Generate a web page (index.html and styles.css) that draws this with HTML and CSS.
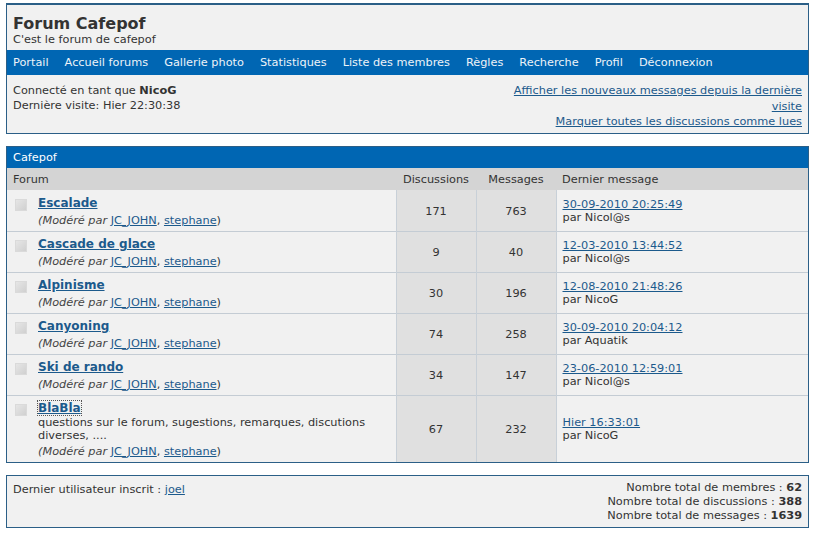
FILE: index.html
```html
<!DOCTYPE html>
<html lang="fr">
<head>
    <meta charset="UTF-8">
    <title>Forum Cafepof</title>
    <link rel="stylesheet" href="styles.css">
</head>
<body>
    <div class="box header">
        <div class="brand">
            <h1>Forum Cafepof</h1>
            <p>C'est le forum de cafepof</p>
        </div>
        <ul class="nav">
            <li><a href="#">Portail</a></li>
            <li><a href="#">Accueil forums</a></li>
            <li><a href="#">Gallerie photo</a></li>
            <li><a href="#">Statistiques</a></li>
            <li><a href="#">Liste des membres</a></li>
            <li><a href="#">Règles</a></li>
            <li><a href="#">Recherche</a></li>
            <li><a href="#">Profil</a></li>
            <li><a href="#">Déconnexion</a></li>
        </ul>
        <div class="userbar">
            <div>
                Connecté en tant que <strong>NicoG</strong><br>
                Dernière visite: Hier 22:30:38
            </div>
            <div class="userlinks">
                <a href="#">Afficher les nouveaux messages depuis la dernière visite</a><br>
                <a href="#">Marquer toutes les discussions comme lues</a>
            </div>
        </div>
    </div>

    <div class="box category">
        <h2>Cafepof</h2>
        <table class="forums">
            <thead>
                <tr>
                    <th class="col-forum">Forum</th>
                    <th class="col-num">Discussions</th>
                    <th class="col-num">Messages</th>
                    <th class="col-last">Dernier message</th>
                </tr>
            </thead>
            <tbody>
                <tr>
                    <td class="forum">
                        <div class="forum-row">
                            <span class="icon"></span>
                            <div class="info">
                                <a class="title" href="#">Escalade</a>
                                <div class="mods"><em>(Modéré par</em> <a href="#">JC_JOHN</a>, <a href="#">stephane</a>)</div>
                            </div>
                        </div>
                    </td>
                    <td class="num">171</td>
                    <td class="num">763</td>
                    <td class="last"><a href="#">30-09-2010 20:25:49</a><br>par Nicol@s</td>
                </tr>
                <tr>
                    <td class="forum">
                        <div class="forum-row">
                            <span class="icon"></span>
                            <div class="info">
                                <a class="title" href="#">Cascade de glace</a>
                                <div class="mods"><em>(Modéré par</em> <a href="#">JC_JOHN</a>, <a href="#">stephane</a>)</div>
                            </div>
                        </div>
                    </td>
                    <td class="num">9</td>
                    <td class="num">40</td>
                    <td class="last"><a href="#">12-03-2010 13:44:52</a><br>par Nicol@s</td>
                </tr>
                <tr>
                    <td class="forum">
                        <div class="forum-row">
                            <span class="icon"></span>
                            <div class="info">
                                <a class="title" href="#">Alpinisme</a>
                                <div class="mods"><em>(Modéré par</em> <a href="#">JC_JOHN</a>, <a href="#">stephane</a>)</div>
                            </div>
                        </div>
                    </td>
                    <td class="num">30</td>
                    <td class="num">196</td>
                    <td class="last"><a href="#">12-08-2010 21:48:26</a><br>par NicoG</td>
                </tr>
                <tr>
                    <td class="forum">
                        <div class="forum-row">
                            <span class="icon"></span>
                            <div class="info">
                                <a class="title" href="#">Canyoning</a>
                                <div class="mods"><em>(Modéré par</em> <a href="#">JC_JOHN</a>, <a href="#">stephane</a>)</div>
                            </div>
                        </div>
                    </td>
                    <td class="num">74</td>
                    <td class="num">258</td>
                    <td class="last"><a href="#">30-09-2010 20:04:12</a><br>par Aquatik</td>
                </tr>
                <tr>
                    <td class="forum">
                        <div class="forum-row">
                            <span class="icon"></span>
                            <div class="info">
                                <a class="title" href="#">Ski de rando</a>
                                <div class="mods"><em>(Modéré par</em> <a href="#">JC_JOHN</a>, <a href="#">stephane</a>)</div>
                            </div>
                        </div>
                    </td>
                    <td class="num">34</td>
                    <td class="num">147</td>
                    <td class="last"><a href="#">23-06-2010 12:59:01</a><br>par Nicol@s</td>
                </tr>
                <tr>
                    <td class="forum">
                        <div class="forum-row">
                            <span class="icon"></span>
                            <div class="info">
                                <a class="title focused" href="#">BlaBla</a>
                                <div class="desc">questions sur le forum, sugestions, remarques, discutions diverses, ....</div>
                                <div class="mods"><em>(Modéré par</em> <a href="#">JC_JOHN</a>, <a href="#">stephane</a>)</div>
                            </div>
                        </div>
                    </td>
                    <td class="num">67</td>
                    <td class="num">232</td>
                    <td class="last"><a href="#">Hier 16:33:01</a><br>par NicoG</td>
                </tr>
            </tbody>
        </table>
    </div>

    <div class="box stats">
        <div class="newest">Dernier utilisateur inscrit : <a href="#">joel</a></div>
        <div class="totals">
            Nombre total de membres : <strong>62</strong><br>
            Nombre total de discussions : <strong>388</strong><br>
            Nombre total de messages : <strong>1639</strong>
        </div>
    </div>
</body>
</html>
```

FILE: styles.css
```css
/* Base */
body {
    font-family: "DejaVu Sans", Verdana, sans-serif;
    font-size: 11.3px;
    color: #333;
    background: #fff;
    margin: 3px 6px 0 6px;
}

a {
    color: #1c5a8c;
}

/* Boites */
.box {
    background: #f1f1f1;
    border: 1px solid #2b5f87;
}

/* En-tete */
.header {
    border-top-width: 2px;
}
.brand {
    padding: 9px 6px 4px;
}
.brand h1 {
    margin: 0;
    font-size: 16px;
    line-height: 19px;
    color: #333;
}
.brand p {
    margin: 0;
    line-height: 13px;
}

.nav {
    list-style: none;
    margin: 0;
    padding: 0 6px;
    height: 25px;
    display: flex;
    align-items: center;
    gap: 16px;
    background: #0066b3;
}
.nav a {
    color: #eef3f8;
    text-decoration: none;
}

.userbar {
    display: flex;
    justify-content: space-between;
    padding: 8px 6px 0;
    line-height: 15px;
    min-height: 50px;
}
.userlinks {
    width: 300px;
    text-align: right;
    line-height: 15.5px;
}

/* Categorie */
.category {
    margin-top: 12px;
}
.category h2 {
    margin: 0;
    height: 21px;
    line-height: 21px;
    padding: 0 6px;
    font-size: 11.3px;
    font-weight: normal;
    color: #fff;
    background: #0066b3;
}

.forums {
    width: 100%;
    border-collapse: collapse;
}
.forums th {
    background: #d4d4d4;
    font-weight: normal;
    height: 22px;
    padding: 0 6px;
    text-align: left;
}
.forums th.col-num {
    text-align: center;
    width: 68px;
}
.forums th.col-last {
    width: 240px;
}
.forums td {
    border-top: 1px solid #c4ccd4;
    height: 40px;
    padding: 0;
}
.forums td.forum {
    padding: 5px 0 3px 8px;
    height: auto;
}
.forums td.last {
    border-left: 1px solid #c8d0d8;
    padding: 0 6px;
    line-height: 13px;
}
.forums tbody tr:first-child td {
    border-top: none;
    padding-top: 1px;
}
.forums tbody tr:first-child td.forum {
    padding-top: 6px;
}
.forum-row {
    display: flex;
    align-items: flex-start;
}

.icon {
    width: 10px;
    height: 10px;
    margin: 3px 11px 0 0;
    background: linear-gradient(135deg, #e6e6e6, #d0d0d0);
    border: 1px solid #dadada;
    flex: none;
}
.info {
    line-height: 14px;
}
.title {
    font-weight: bold;
    font-size: 12px;
    line-height: 15px;
}
.title.focused {
    outline: 1px dotted #555;
}
.mods {
    margin-top: 3px;
}
.mods em {
    color: #444;
}
.desc {
    line-height: 13px;
    margin-bottom: 1px;
}

.num {
    background: #e0e0e0;
    border-left: 1px solid #c8d0d8;
    text-align: center;
}

/* Statistiques */
.stats {
    margin-top: 12px;
    display: flex;
    justify-content: space-between;
    padding: 5px 6px 4px;
    line-height: 14px;
}
.newest {
    padding-top: 2px;
}
.totals {
    text-align: right;
}
```
